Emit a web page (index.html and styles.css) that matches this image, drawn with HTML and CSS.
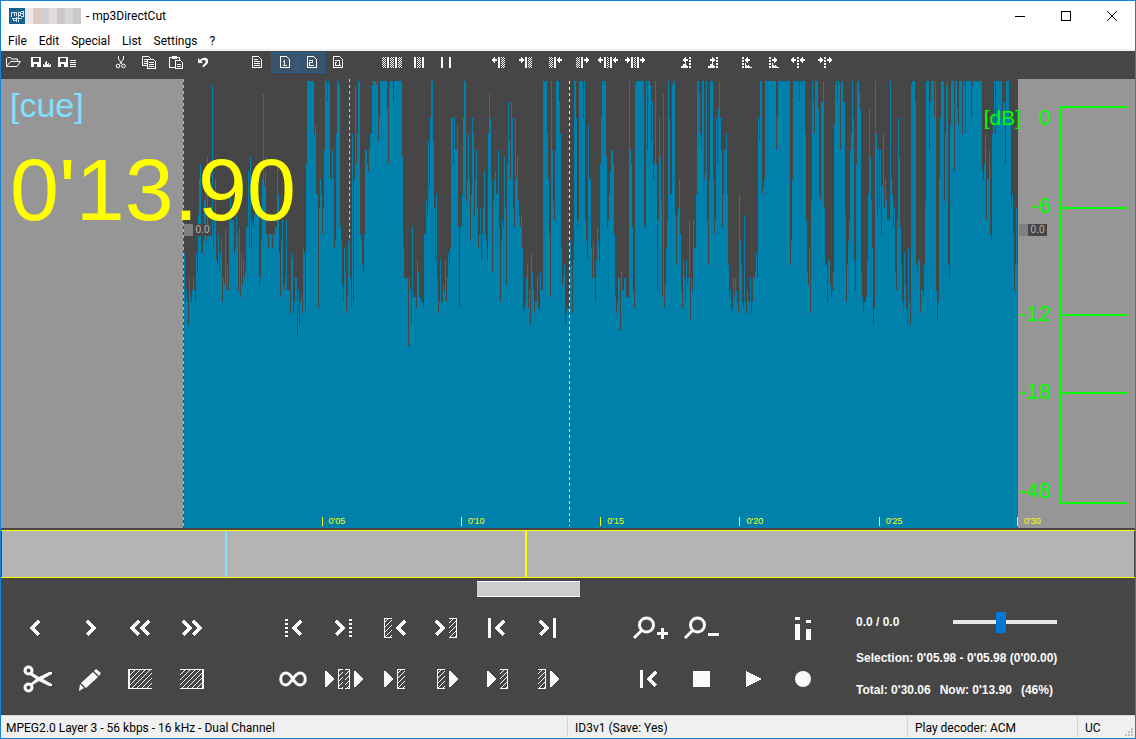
FILE: index.html
```html
<!DOCTYPE html>
<html lang="en">
<head>
<meta charset="utf-8">
<title>mp3DirectCut</title>
<link rel="stylesheet" href="styles.css">
</head>
<body>
<svg class="defs" width="0" height="0" aria-hidden="true">
  <defs>
    <pattern id="dither" width="2" height="2" patternUnits="userSpaceOnUse"><rect width="1" height="1"/><rect x="1" y="1" width="1" height="1"/></pattern>
    <pattern id="hatch" width="5" height="5" patternUnits="userSpaceOnUse"><path d="M0 4h1v1h-1zM1 3h1v1h-1zM2 2h1v1h-1zM3 1h1v1h-1zM4 0h1v1h-1z"/></pattern>
    <path id="left" d="M0 2h1v-1h1v-1h1v2h2v2h-2v2h-1v-1h-1v-1h-1z"/>
    <path id="right" d="M5 2h-1v-1h-1v-1h-1v2h-2v2h2v2h1v-1h1v-1h1z"/>
    <path id="dots" d="M0 0h2v2h-2zM0 3h2v2h-2zM0 6h2v2h-2zM0 9h2v2h-2z"/>
    <path id="less" class="line" d="M9 1L2 8l7 7"/>
    <path id="more" class="line" d="M1 1l7 7l-7 7"/>
    <path id="tri" d="M0 0h1l8 8l-8 8h-1z"/>
    <path id="bigdots" d="M0 0h3v2h-3zM0 4h3v2h-3zM0 8h3v2h-3zM0 12h3v2h-3zM0 16h3v2h-3z"/>
    <g id="hatchopen"><path d="M0 0h8v1h-7v18h7v1h-8z"/><rect x="1" y="1" width="7" height="18" fill="url(#hatch)"/></g>
    <g id="hatchclose"><path d="M0 0h8v20h-8v-1h7v-18h-7z"/><rect y="1" width="7" height="18" fill="url(#hatch)"/></g>
  </defs>
</svg>
<div class="window">
  <header class="titlebar">
    <svg class="logo" width="16" height="16" viewBox="0 0 16 16"><rect width="16" height="16" rx="1" fill="#1b5f8c"/><path d="M2.500 9V4.500h5V8M5 5v3M9 11V4.500h2v3H9M12 3.500h2.500v4.500H12M12 5.500h2M3 10.500h10M7.500 10.500H4.500v2h3M7.500 9v5M9.500 10v4" fill="none" stroke="#cfe6f2"/></svg>
    <span class="blur"></span>
    <h1 class="title">- mp3DirectCut</h1>
    <div class="winbtns">
      <button aria-label="Minimize"><svg width="10" height="10" viewBox="0 0 10 10"><path d="M0 5.500h10"/></svg></button>
      <button aria-label="Maximize"><svg width="10" height="10" viewBox="0 0 10 10"><path d="M.5.5h9v9h-9z"/></svg></button>
      <button aria-label="Close"><svg class="soft" width="10" height="10" viewBox="0 0 10 10"><path d="M0 0l10 10M10 0L0 10"/></svg></button>
    </div>
  </header>
  <nav class="menu"><button>File</button><button>Edit</button><button>Special</button><button>List</button><button>Settings</button><button>?</button></nav>
  <div class="toolbar">
    <div class="tools">
      <button aria-label="Open"><svg viewBox="1 52 27 21"><path class="thin soft" d="M6.500 66.500v-8l1-1h3l1 1.500h6v2.500M6.500 66.500l4-5h10l-3.500 5z"/></svg></button>
      <button aria-label="Save audio"><svg viewBox="28 52 27 21"><path fill-rule="evenodd" d="M31 57h10v10h-10zM33 58v4h6v-4zM34 64v3h3v-3z"/><path d="M43 67v-3h1v1h1v-3h1v-1h1v3h1v-1h1v2h1v-1h1v3z"/></svg></button>
      <button aria-label="Save list"><svg viewBox="55 52 27 21"><path fill-rule="evenodd" d="M58 57h10v10h-10zM60 58v4h6v-4zM61 64v3h3v-3z"/><path d="M70 60h6v1h-6zM70 62h6v1h-6zM70 64h6v1h-6zM70 66h6v1h-6z"/></svg></button>
    </div>
    <div class="tools">
      <button aria-label="Cut"><svg viewBox="109 52 27 21"><path class="thin soft" d="M118.500 56v3l4 5.500M123.500 56v3l-4 5.500"/><circle class="thin soft" cx="118" cy="66" r="1.800"/><circle class="thin soft" cx="123.500" cy="66" r="1.800"/></svg></button>
      <button aria-label="Copy"><svg viewBox="136 52 27 21"><path class="thin" d="M147.500 65.500h-5v-9h6l2 2v1M144 59.500h3M144 61.500h3M144 63.500h3M147.500 59.500h6l2 2v7h-8zM149 62.500h5M149 64.500h5M149 66.500h5"/></svg></button>
      <button aria-label="Paste"><svg viewBox="163 52 27 21"><path class="thin" d="M175.500 67.500h-6v-10h10v3M175.500 60.500h5l2 2v6h-7zM177 64.500h4M177 66.500h4"/><path d="M172 56h5v3h-5z"/></svg></button>
      <button aria-label="Undo"><svg viewBox="190 52 27 21"><path class="soft" d="M198 58v5h5l-1.800-1.800c1.800-2 4.500-1.500 4.500.5c0 1.800-2 2-3.500 4.500l1.500 1c2-2.500 4.500-3 4.500-6c0-4-5-4.500-8.300-1.300z"/></svg></button>
    </div>
    <div class="tools">
      <button aria-label="Text list"><svg viewBox="244 52 27 21"><path class="thin" d="M252.500 56.500h6l3 3v8h-9zM254 59.500h4M254 61.500h6M254 63.500h6M254 65.500h6"/></svg></button>
      <button class="on" aria-label="ID3 version 1"><svg viewBox="271 52 27 21"><path class="thin" d="M280.500 56.500h6l3 3v8h-9zM283 61.500h1.500M284.500 60v6M283 65.500h4"/></svg></button>
      <button class="on" aria-label="ID3 version 2"><svg viewBox="298 52 27 21"><path class="thin" d="M307.500 56.500h6l3 3v8h-9zM309 60.500h3.500v2h-3v3h4"/></svg></button>
      <button aria-label="Tag info"><svg viewBox="325 52 27 21"><path class="thin" d="M333.500 56.500h6l3 3v8h-9zM335 60.500h4.500v4.500M337 62.500h-1.500v3h5"/></svg></button>
    </div>
    <div class="tools">
      <button aria-label="Select all"><svg viewBox="379 52 27 21"><path fill="url(#dither)" d="M382 57h4v11h-4zM390 57h4v11h-4zM398 57h4v11h-4z"/><path d="M387 57h2v11h-2zM395 57h2v11h-2z"/></svg></button>
      <button aria-label="Select part"><svg viewBox="406 52 27 21"><path fill="url(#dither)" d="M417 57h4v11h-4z"/><path d="M414 57h2v11h-2zM422 57h2v11h-2z"/></svg></button>
      <button aria-label="Select none"><svg viewBox="433 52 27 21"><path d="M441 57h2v11h-2zM449 57h2v11h-2z"/></svg></button>
    </div>
    <div class="tools">
      <button aria-label="Selection start left"><svg viewBox="487 52 27 21"><use href="#left" x="492" y="57"/><path d="M498 57h2v11h-2z"/><path fill="url(#dither)" d="M501 57h4v11h-4z"/></svg></button>
      <button aria-label="Selection start right"><svg viewBox="514 52 27 21"><use href="#right" x="519" y="57"/><path d="M525 57h2v11h-2z"/><path fill="url(#dither)" d="M528 57h4v11h-4z"/></svg></button>
      <button aria-label="Selection end left"><svg viewBox="541 52 27 21"><path fill="url(#dither)" d="M549 57h4v11h-4z"/><path d="M554 57h2v11h-2z"/><use href="#left" x="557" y="57"/></svg></button>
      <button aria-label="Selection end right"><svg viewBox="568 52 27 21"><path fill="url(#dither)" d="M576 57h4v11h-4z"/><path d="M581 57h2v11h-2z"/><use href="#right" x="584" y="57"/></svg></button>
      <button aria-label="Selection left"><svg viewBox="595 52 27 21"><use href="#left" x="598" y="57"/><path d="M604 57h2v11h-2zM610 57h2v11h-2z"/><path fill="url(#dither)" d="M607 57h2v11h-2z"/><use href="#left" x="613" y="57"/></svg></button>
      <button aria-label="Selection right"><svg viewBox="622 52 27 21"><use href="#right" x="625" y="57"/><path d="M631 57h2v11h-2zM637 57h2v11h-2z"/><path fill="url(#dither)" d="M634 57h2v11h-2z"/><use href="#right" x="640" y="57"/></svg></button>
    </div>
    <div class="tools">
      <button aria-label="Previous pause"><svg viewBox="676 52 27 21"><use href="#left" x="683" y="57"/><use href="#dots" x="689" y="57"/><path d="M681 68v-2h2v-2h2v-1h1v2h1v1h1v2z"/></svg></button>
      <button aria-label="Next pause"><svg viewBox="703 52 27 21"><use href="#right" x="710" y="57"/><use href="#dots" x="716" y="57"/><path d="M708 68v-2h2v-2h2v-1h1v2h1v1h1v2z"/></svg></button>
      <button aria-label="Previous level"><svg viewBox="730 52 27 21"><use href="#dots" x="742" y="57"/><use href="#left" x="745" y="57"/><path d="M745 68v-5h1v2h1v1h1v-1h1v1h1v1h2v1z"/></svg></button>
      <button aria-label="Next level"><svg viewBox="757 52 27 21"><use href="#dots" x="769" y="57"/><use href="#right" x="772" y="57"/><path d="M772 68v-5h1v2h1v1h1v-1h1v1h1v1h2v1z"/></svg></button>
      <button aria-label="Cue left"><svg viewBox="784 52 27 21"><use href="#left" x="791" y="57"/><use href="#dots" x="797" y="57"/><use href="#left" x="800" y="57"/></svg></button>
      <button aria-label="Cue right"><svg viewBox="811 52 27 21"><use href="#right" x="818" y="57"/><use href="#dots" x="824" y="57"/><use href="#right" x="827" y="57"/></svg></button>
    </div>
  </div>

  <main class="stage">
    <div class="side"></div>
    <div class="wavebox">
      <svg class="wave" viewBox="0 3 2502 1347" preserveAspectRatio="none" aria-label="Waveform">
        <path transform="translate(-552 0)" d="M552 1350V525H555V672H558V636H561V672H564V741H567V600H570V657H573V672H576V636H579V600H582V636H585V672H588V525H591V582H594V411H597V303H600V258H603V525H609V489H612V369H615V348H618V489H621V237H624V447H636V21H639V510H642V426H645V303H648V546H651V561H654V468H657V582H660V525H663V489H666V672H669V600H672V621H675V447H678V636H681V561H684V636H687V426H690V348H693V426H702V525H705V510H708V411H711V468H714V636H717V447H720V657H723V525H726V621H729V546H732V600H735V582H738V447H744V279H747V510H750V237H753V510H756V426H759V447H762V411H765V390H777V621H780V600H783V489H786V303H789V48H792V324H795V279H798V468H804V510H807V468H816V510H819V468H825V447H831V258H834V348H837V525H840V657H843V489H846V426H849V621H852V636H855V600H858V426H861V636H870V705H873V546H876V525H879V705H882V672H885V600H891V774H894V636H897V741H900V672H903V657H906V705H909V510H912V525H915V705H918V258H921V9H942V168H945V141H948V348H954V690H957V390H960V1350z"/>
        <path transform="translate(348 0)" d="M60 1350V303H63V348H66V468H69V390H72V216H75V9H81V72H84V9H87V21H90V303H96V216H99V303H102V510H105V489H108V168H111V9H117V21H120V447H123V489H126V621H129V672H132V510H135V582H138V705H141V657H144V489H150V600H153V690H156V168H159V672H162V303H165V21H168V258H171V168H174V9H180V468H183V489H186V561H189V582H192V468H195V216H201V258H204V279H207V216H210V168H216V21H219V9H228V21H231V9H234V189H237V120H240V9H261V93H264V258H267V21H270V9H279V72H282V9H306V237H309V510H312V600H324V804H327V600H330V636H333V741H336V447H339V657H348V690H351V546H354V582H357V657H363V672H369V690H372V468H378V369H381V411H384V189H387V324H390V120H393V9H399V189H402V390H405V546H408V348H411V600H414V705H417V672H420V546H423V672H429V621H432V636H435V546H438V672H441V600H444V525H447V561H450V510H453V120H459V258H462V120H465V216H471V141H474V447H477V690H480V447H486V348H489V120H492V9H498V369H501V303H504V168H507V303H510V489H513V348H516V120H519V168H522V411H525V303H528V216H531V390H534V510H537V468H540V390H543V546H546V468H549V390H552V279H555V468H558V489H561V546H564V168H567V48H570V120H573V303H576V582H579V369H582V303H585V279H588V348H594V216H597V447H600V672H603V489H606V426H609V447H612V237H615V390H618V621H621V258H624V72H627V189H630V303H633V72H636V120H639V390H642V447H645V120H648V303H651V237H654V369H657V411H660V447H663V411H666V510H669V705H672V690H675V672H678V600H681V561H684V690H687V636H690V741H693V525H696V582H699V636H702V705H705V672H711V600H714V690H717V705H720V1350z"/>
        <path transform="translate(1068 0)" d="M0 1350V582H3V636H9V9H21V168H24V303H27V468H30V657H33V9H36V216H39V369H42V426H45V216H48V9H57V72H60V168H63V510H66V621H69V600H72V561H75V741H78V705H81V690H90V489H93V561H96V705H99V546H102V9H108V120H111V447H114V426H117V9H129V120H132V9H135V426H138V489H141V546H144V141H147V303H153V510H156V600H159V489H162V600H165V672H168V546H171V447H174V489H177V561H180V258H183V120H186V9H189V21H192V9H198V237H201V447H204V426H207V348H210V279H213V216H219V258H222V468H225V657H228V705H231V672H234V600H240V756H243V582H246V636H252V600H258V657H267V9H270V216H273V258H276V447H279V636H282V690H285V21H288V9H312V447H318V9H321V216H324V9H330V21H333V189H336V72H339V303H342V258H345V9H348V258H351V636H354V426H357V120H360V237H363V369H366V657H369V48H372V690H375V621H378V510H381V426H384V9H387V120H390V348H396V21H399V9H405V411H408V561H411V411H414V390H417V303H420V468H423V636H426V690H429V546H432V600H435V672H438V546H441V621H444V600H447V426H450V726H453V600H456V636H459V426H462V510H468V348H471V9H477V48H480V168H483V216H486V9H492V303H495V279H498V9H501V426H504V561H507V303H510V9H519V303H522V468H525V426H528V120H531V258H534V93H537V9H540V120H543V216H546V447H549V348H552V216H558V168H561V348H564V561H567V657H570V636H573V705H576V690H579V600H582V657H585V600H588V636H591V672H594V705H597V348H600V489H603V561H606V672H609V690H612V411H615V672H618V705H621V636H624V672H630V600H633V705H636V672H639V600H645V582H648V525H651V600H654V120H657V189H660V9H666V348H669V324H672V303H675V9H708V216H711V120H714V9H720V1350z"/>
        <path transform="translate(1788 0)" d="M0 1350V9H30V561H33V489H36V303H39V9H57V72H60V9H63V21H66V9H75V168H78V426H81V582H84V621H87V510H90V705H93V369H96V9H99V72H102V168H105V9H114V93H117V348H120V369H123V72H129V9H132V390H135V561H141V672H144V546H150V621H153V657H156V636H159V582H162V141H165V21H168V9H171V72H174V9H177V21H180V216H183V9H189V72H195V411H198V672H201V561H204V489H207V426H210V216H213V168H216V9H219V120H222V546H225V636H228V258H231V9H237V48H240V93H243V582H246V657H249V705H252V672H258V657H261V546H264V348H267V93H270V237H273V369H276V510H279V741H282V690H285V9H288V168H291V411H294V216H297V390H300V216H303V468H306V324H309V168H312V390H315V303H318V369H321V426H330V9H333V303H336V348H339V447H342V390H345V582H348V636H351V426H354V120H357V237H360V447H363V561H366V672H369V705H372V525H375V621H378V690H381V741H384V510H387V672H390V741H393V21H396V9H405V72H408V561H411V582H414V546H420V705H423V636H429V657H432V561H435V369H438V9H447V216H450V72H453V9H462V120H465V9H468V636H471V726H474V672H477V303H480V120H483V9H492V369H495V168H498V21H501V9H504V561H507V600H510V141H513V9H522V279H525V9H531V93H534V141H537V9H546V168H549V21H552V9H555V168H558V9H573V120H576V21H579V9H606V279H609V303H612V258H615V168H618V426H621V303H627V216H630V468H633V489H636V168H639V120H642V9H645V168H648V9H666V120H669V72H675V258H678V9H687V120H693V390H696V348H699V468H702V636H705V561H708V390H711V561H714V1350z"/>
      </svg>
      <div class="dash start"></div><div class="dash selection"></div><div class="dash cursor"></div>
      <div class="axis"><span>0'05</span><span>0'10</span><span>0'15</span><span>0'20</span><span>0'25</span></div>
      <span class="axis-end">0'30</span>
      <div class="gain gain-start"><i></i><b>0.0</b></div>
      <div class="gain gain-end"><i></i><b>0.0</b></div>
    </div>
    <div class="side">
      <div class="meter"><i class="m6"></i><i class="m12"></i><i class="m18"></i></div>
    </div>
    <div class="scale"><span class="unit">[dB]</span><span class="l0">0</span><span class="l6">-6</span><span class="l12">-12</span><span class="l18">-18</span><span class="l48">-48</span></div>
    <div class="hud"><div class="cue">[cue]</div><div class="time">0'13.90</div></div>
  </main>

  <div class="overview"><div class="track"><i class="mark cyan"></i><i class="mark yellow"></i></div></div>

  <section class="deck">
    <div class="scrollbar"><div class="thumb"></div></div>
    <div class="controls">
      <div class="keys four">
        <button aria-label="Step back"><svg viewBox="12 608 51 40"><use href="#less" x="30" y="620"/></svg></button>
        <button aria-label="Step forward"><svg viewBox="63 608 51 40"><use href="#more" x="86" y="620"/></svg></button>
        <button aria-label="Page back"><svg viewBox="114 608 51 40"><use href="#less" x="130" y="620"/><use href="#less" x="140" y="620"/></svg></button>
        <button aria-label="Page forward"><svg viewBox="165 608 51 40"><use href="#more" x="182" y="620"/><use href="#more" x="192" y="620"/></svg></button>
        <button aria-label="Cut"><svg class="soft" viewBox="12 659 51 40"><circle class="line2" cx="28.500" cy="670.500" r="3.500"/><circle class="line2" cx="28.500" cy="687.500" r="3.500"/><path d="M31 672l8 5l10-5h3v2l-9 5l9 5v2h-3l-10-5l-8 5l-1-2l6-5l-6-4z"/></svg></button>
        <button aria-label="Edit"><svg class="soft" viewBox="63 659 51 40"><path d="M94 671l2-2l5 4l-2 3zM93 672l5 5l-12 11l-5-5zM80 684l4 4l-5 3z"/></svg></button>
        <button aria-label="Set selection start"><svg viewBox="114 659 51 40"><path d="M128 669h24v1h-22v18h22v1h-24z"/><path fill="url(#hatch)" d="M130 670h22v18h-22z"/></svg></button>
        <button aria-label="Set selection end"><svg viewBox="165 659 51 40"><path d="M180 669h24v20h-24v-1h22v-18h-22z"/><path fill="url(#hatch)" d="M180 670h22v18h-22z"/></svg></button>
      </div>
      <div class="keys six">
        <button aria-label="Previous cue"><svg viewBox="268 608 51 40"><use href="#bigdots" x="285" y="619"/><use href="#less" x="292" y="620"/></svg></button>
        <button aria-label="Next cue"><svg viewBox="319 608 51 40"><use href="#more" x="335" y="620"/><use href="#bigdots" x="349" y="619"/></svg></button>
        <button aria-label="Go to selection start"><svg viewBox="370 608 51 40"><use href="#hatchopen" x="384" y="618"/><use href="#less" x="396" y="620"/></svg></button>
        <button aria-label="Go to selection end"><svg viewBox="421 608 51 40"><use href="#more" x="435" y="620"/><use href="#hatchclose" x="449" y="618"/></svg></button>
        <button aria-label="Go to file start"><svg viewBox="472 608 51 40"><path d="M488 618h3v20h-3z"/><use href="#less" x="495" y="620"/></svg></button>
        <button aria-label="Go to file end"><svg viewBox="523 608 51 40"><use href="#more" x="539" y="620"/><path d="M553 618h3v20h-3z"/></svg></button>
        <button aria-label="Loop"><svg class="soft" viewBox="268 659 51 40"><path class="line2" d="M293 679c-3-5-5-6-7-6c-7 0-7 12 0 12c5 0 8-12 14-12c7 0 7 12 0 12c-2 0-4-1-7-6z"/></svg></button>
        <button aria-label="Play across cut"><svg viewBox="319 659 51 40"><use href="#tri" x="325" y="671"/><path d="M338 669h5v1h-4v18h4v1h-5zM345 669h5v20h-5v-1h4v-18h-4z"/><path fill="url(#hatch)" d="M339 670h4v18h-4zM345 670h4v18h-4z"/><use href="#tri" x="354" y="671"/></svg></button>
        <button aria-label="Play to selection start"><svg viewBox="370 659 51 40"><use href="#tri" x="384" y="671"/><use href="#hatchopen" x="397" y="669"/></svg></button>
        <button aria-label="Play from selection start"><svg viewBox="421 659 51 40"><use href="#hatchopen" x="437" y="669"/><use href="#tri" x="449" y="671"/></svg></button>
        <button aria-label="Play to selection end"><svg viewBox="472 659 51 40"><use href="#tri" x="487" y="671"/><use href="#hatchclose" x="500" y="669"/></svg></button>
        <button aria-label="Play from selection end"><svg viewBox="523 659 51 40"><use href="#hatchclose" x="538" y="669"/><use href="#tri" x="550" y="671"/></svg></button>
      </div>
      <div class="keys four last">
        <button aria-label="Zoom in"><svg class="soft" viewBox="625 608 51 40"><circle class="line" cx="646.500" cy="625" r="7"/><path class="line" d="M642 630l-8 8"/><path d="M657 632h4v-4h3v4h4v3h-4v4h-3v-4h-4z"/></svg></button>
        <button aria-label="Zoom out"><svg class="soft" viewBox="676 608 51 40"><circle class="line" cx="697.500" cy="625" r="7"/><path class="line" d="M693 630l-8 8"/><path d="M708 633h11v3h-11z"/></svg></button>
        <span></span>
        <button aria-label="Level display"><svg viewBox="778 608 51 40"><path d="M795 617h5v3h-5zM795 624h5v16h-5zM806 620h5v3h-5zM806 629h5v11h-5z"/></svg></button>
        <button aria-label="To start"><svg viewBox="625 659 51 40"><path d="M640 670h3v18h-3z"/><use href="#less" x="647" y="671"/></svg></button>
        <button aria-label="Stop"><svg viewBox="676 659 51 40"><path d="M693 671h17v16h-17z"/></svg></button>
        <button aria-label="Play"><svg viewBox="727 659 51 40"><path d="M746 671l16 8l-16 8z"/></svg></button>
        <button aria-label="Record"><svg class="soft" viewBox="778 659 51 40"><circle cx="803" cy="679" r="8"/></svg></button>
      </div>
      <div class="info">
        <div class="gainrow"><label for="gain">0.0 / 0.0</label><input id="gain" type="range" min="0" max="100" value="45"></div>
        <div>Selection: 0'05.98 - 0'05.98 (0'00.00)</div>
        <div class="totals"><span>Total: 0'30.06</span><span>Now: 0'13.90</span><span>(46%)</span></div>
      </div>
    </div>
  </section>

  <footer class="status"><span>MPEG2.0 Layer 3 - 56 kbps - 16 kHz - Dual Channel</span><span>ID3v1 (Save: Yes)</span><span>Play decoder: ACM</span><span>UC</span>
    <svg class="grip" width="8" height="8" viewBox="0 0 8 8"><path d="M6 0h2v2h-2zM3 3h2v2h-2zM6 3h2v2h-2zM0 6h2v2h-2zM3 6h2v2h-2zM6 6h2v2h-2z"/></svg>
  </footer>
</div>
</body>
</html>
```
FILE: styles.css
```css
* { box-sizing: border-box; }
body { margin: 0; font: 12px Roboto, "Open Sans", "Noto Sans", sans-serif; color: #000; }
button { border: 0; padding: 0; background: none; font: inherit; color: inherit; }
svg { display: block; shape-rendering: crispEdges; }
.soft { shape-rendering: auto; }
.defs { position: absolute; fill: #fafafa; }
.window { display: flex; flex-direction: column; min-height: 100vh; border: 1px solid #1a80d4; background: #fff; }

.titlebar { display: flex; align-items: center; height: 29px; padding-left: 8px; }
.blur { width: 56px; height: 16px; background: linear-gradient(90deg, #e9e7e8 0 8px, #dcc8c4 8px 16px, #cdd0d4 16px 24px, #e4dcd9 24px 32px, #c9c9cd 32px 40px, #d8d5d8 40px 48px, #cbc7c6 48px); }
.title { margin: 0 0 0 5px; font-size: 12px; font-weight: 400; line-height: 16px; }
.winbtns { display: flex; margin-left: auto; }
.winbtns button { display: grid; place-items: center; width: 46px; height: 28px; }
.winbtns path { fill: none; stroke: #000; }
.menu { display: flex; height: 21px; padding: 1px 0 0 1px; border-bottom: 2px solid #f0f0f0; }
.menu button { padding: 0 6px; line-height: 20px; }

.toolbar { display: flex; gap: 27px; height: 28px; padding-top: 1px; background: #464646; }
.tools { display: flex; }
.tools button { width: 27px; height: 21px; }
.tools svg { width: 27px; height: 21px; fill: #fafafa; }
.tools .on { background: #3a546b; outline: 1px solid #285d8c; outline-offset: -1px; }
.thin { fill: none; stroke: #fafafa; }
.line { fill: none; stroke: #fafafa; stroke-width: 3; }
.line2 { fill: none; stroke: #fafafa; stroke-width: 3; }

.stage { position: relative; flex: 1; display: grid; grid-template-columns: 183px 1fr 117px; min-height: 440px; border-bottom: 2px solid #464646; background: #464646; font-family: "Liberation Sans", Arial, sans-serif; }
.side { position: relative; background: #969696; }
.wavebox { position: relative; z-index: 1; }
.wave { position: absolute; width: 100%; height: 100%; fill: #0081ac; }
.dash { position: absolute; top: 0; width: 1px; height: 100%; --c: #b4b4b4; background: repeating-linear-gradient(var(--c) 0 3px, transparent 3px 6px); }
.start { left: -1px; background-color: #464646; }
.selection { --c: #8fe0fc; left: 19.8%; height: 36%; }
.cursor { --c: #ffff4a; left: 46.2%; top: 2px; bottom: 2px; height: auto; }
.axis { position: absolute; inset: auto 0 2px 16.5%; display: flex; }
.axis span { flex: 1; }
.axis span, .axis-end { font-size: 9px; line-height: 9px; padding-left: 6px; border-left: 1px solid #ff0; color: #ff0; }
.axis-end { position: absolute; left: 100%; bottom: 2px; margin-left: -1px; }
.gain { position: absolute; top: 145px; display: flex; height: 12px; font-size: 10px; line-height: 12px; color: #bbb; }
.gain i { width: 9px; background: #7f7f7f; }
.gain b { width: 19px; background: #464646; font-weight: 400; text-align: center; }
.gain-start { left: 0; }
.gain-end { left: 100%; margin-left: 1px; }
.meter { position: absolute; left: 42px; right: 7px; top: 6%; bottom: 5.3%; border: 2px solid #0f0; border-right-width: 1px; }
.meter i { position: absolute; left: 0; right: 0; height: 2px; background: #0f0; }
.m6 { top: 25%; }
.m12 { top: 52.3%; }
.m18 { top: 72%; }
.scale { position: absolute; z-index: 2; right: 84px; top: 0; bottom: 0; color: #0f0; font-size: 22px; line-height: 24px; }
.scale span { position: absolute; right: 0; margin-top: -12px; white-space: nowrap; }
.scale .unit { top: 8.6%; right: 30px; font-size: 21px; }
.l0 { top: 8.6%; }
.l6 { top: 28.3%; }
.l12 { top: 52.4%; }
.l18 { top: 69.8%; }
.l48 { top: 91.7%; }
.hud { position: absolute; z-index: 2; left: 9px; top: 8px; }
.cue { color: #80e1ff; font-size: 34px; line-height: 36px; }
.time { color: #ff0; font-size: 88px; line-height: 68px; margin-top: 33px; }

.overview { height: 48px; padding: 0 1px; border: solid #ff0; border-width: 1px 0; background: #464646; }
.track { position: relative; height: 100%; background: #b4b4b4; }
.mark { position: absolute; width: 2px; height: 100%; }
.cyan { left: 19.7%; background: #80e1ff; }
.yellow { left: 46.2%; background: #ff0; }

.deck { background: #464646; color: #fafafa; }
.scrollbar { padding: 3px 0 0 42%; }
.thumb { width: 103px; height: 16px; border: solid #fff; border-width: 1px 0; background: #cdcdcd; }
.controls { display: flex; align-items: flex-start; padding: 11px 0 16px 11px; }
.keys { display: grid; grid-template-columns: repeat(4, 51px); gap: 11px 0; margin-right: 52px; }
.six { grid-template-columns: repeat(6, 51px); margin-right: 51px; }
.last { margin-right: 27px; }
.keys button, .keys svg { display: block; width: 51px; height: 40px; }
.keys svg { fill: #fafafa; }
.info { display: flex; flex-direction: column; gap: 16px; padding-top: 2px; font: bold 12px/16px "Liberation Sans", Arial, sans-serif; white-space: nowrap; }
.gainrow { display: flex; align-items: center; justify-content: space-between; height: 24px; }
.totals { display: flex; gap: 9px; }
input[type=range] { appearance: none; width: 104px; height: 21px; margin: 0; background: linear-gradient(#e7e7e7, #e7e7e7) center / 100% 4px no-repeat; }
input[type=range]::-webkit-slider-thumb { appearance: none; width: 10px; height: 21px; background: #0078d7; }

.status { position: relative; display: grid; grid-template-columns: 567fr 340fr 170fr 57px; height: 23px; border-top: 1px solid #d9d9d9; background: #f0f0f0; line-height: 24px; white-space: nowrap; }
.status span { height: 21px; padding-left: 5px; border-right: 1px solid #d5d5d5; }
.status span + span { padding-left: 7px; }
.status span:last-of-type { border: 0; }
.grip { position: absolute; right: 2px; bottom: 2px; fill: #bfbfbf; }
```
